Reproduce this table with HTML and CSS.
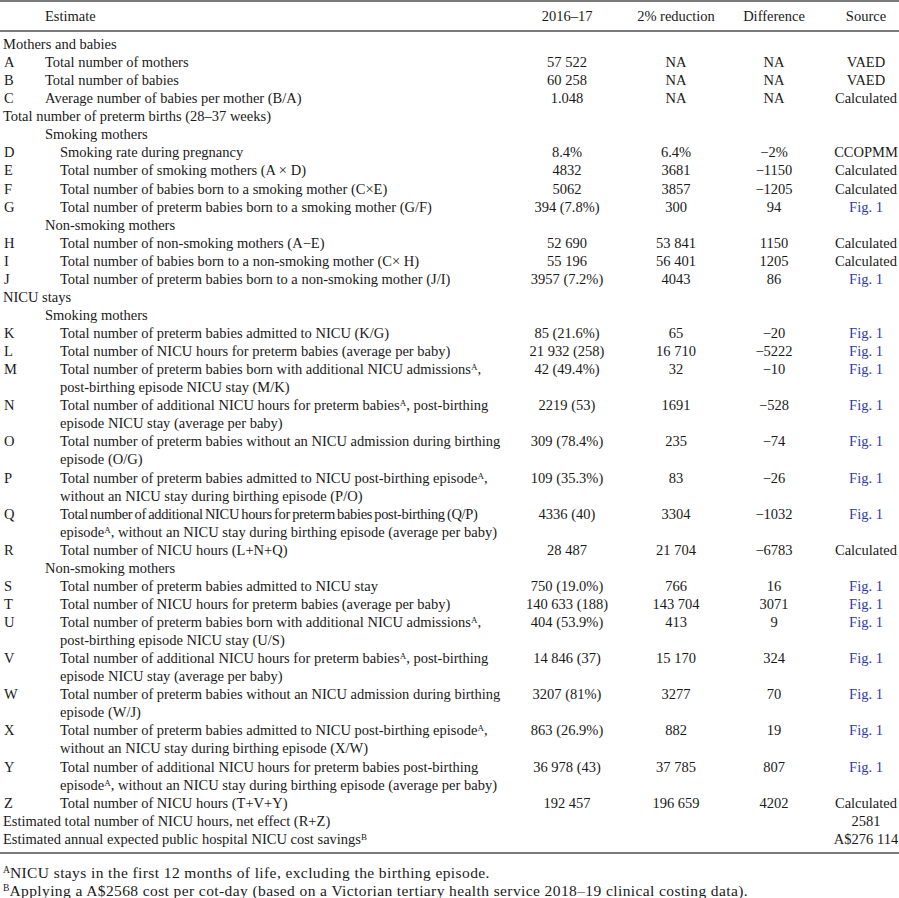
FILE: index.html
```html
<!DOCTYPE html>
<html lang="en">
<head>
<meta charset="utf-8">
<title>Estimated NICU cost savings</title>
<link rel="stylesheet" href="styles.css">
</head>
<body>
<table class="tbl">
  <colgroup>
    <col class="c-key">
    <col class="c-desc">
    <col class="c-a">
    <col class="c-b">
    <col class="c-c">
    <col class="c-src">
  </colgroup>
  <thead>
    <tr class="head">
      <th class="key"></th>
      <th class="desc">Estimate</th>
      <th class="num">2016–17</th>
      <th class="num">2% reduction</th>
      <th class="num">Difference</th>
      <th class="src">Source</th>
    </tr>
  </thead>
  <tbody>
    <tr class="sec first"><td colspan="6">Mothers and babies</td></tr>
    <tr><td class="key">A</td><td class="desc">Total number of mothers</td><td class="num">57 522</td><td class="num">NA</td><td class="num">NA</td><td class="src">VAED</td></tr>
    <tr><td class="key">B</td><td class="desc">Total number of babies</td><td class="num">60 258</td><td class="num">NA</td><td class="num">NA</td><td class="src">VAED</td></tr>
    <tr><td class="key">C</td><td class="desc">Average number of babies per mother (B/A)</td><td class="num">1.048</td><td class="num">NA</td><td class="num">NA</td><td class="src">Calculated</td></tr>
    <tr class="sec"><td colspan="6">Total number of preterm births (28–37 weeks)</td></tr>
    <tr class="sub"><td colspan="6">Smoking mothers</td></tr>
    <tr><td class="key">D</td><td class="desc ind">Smoking rate during pregnancy</td><td class="num">8.4%</td><td class="num">6.4%</td><td class="num">−2%</td><td class="src">CCOPMM</td></tr>
    <tr><td class="key">E</td><td class="desc ind">Total number of smoking mothers (A × D)</td><td class="num">4832</td><td class="num">3681</td><td class="num">−1150</td><td class="src">Calculated</td></tr>
    <tr><td class="key">F</td><td class="desc ind">Total number of babies born to a smoking mother (C×E)</td><td class="num">5062</td><td class="num">3857</td><td class="num">−1205</td><td class="src">Calculated</td></tr>
    <tr><td class="key">G</td><td class="desc ind">Total number of preterm babies born to a smoking mother (G/F)</td><td class="num">394 (7.8%)</td><td class="num">300</td><td class="num">94</td><td class="src"><a class="fig" href="#">Fig. 1</a></td></tr>
    <tr class="sub"><td colspan="6">Non-smoking mothers</td></tr>
    <tr><td class="key">H</td><td class="desc ind">Total number of non-smoking mothers (A−E)</td><td class="num">52 690</td><td class="num">53 841</td><td class="num">1150</td><td class="src">Calculated</td></tr>
    <tr><td class="key">I</td><td class="desc ind">Total number of babies born to a non-smoking mother (C× H)</td><td class="num">55 196</td><td class="num">56 401</td><td class="num">1205</td><td class="src">Calculated</td></tr>
    <tr><td class="key">J</td><td class="desc ind">Total number of preterm babies born to a non-smoking mother (J/I)</td><td class="num">3957 (7.2%)</td><td class="num">4043</td><td class="num">86</td><td class="src"><a class="fig" href="#">Fig. 1</a></td></tr>
    <tr class="sec"><td colspan="6">NICU stays</td></tr>
    <tr class="sub"><td colspan="6">Smoking mothers</td></tr>
    <tr><td class="key">K</td><td class="desc ind">Total number of preterm babies admitted to NICU (K/G)</td><td class="num">85 (21.6%)</td><td class="num">65</td><td class="num">−20</td><td class="src"><a class="fig" href="#">Fig. 1</a></td></tr>
    <tr><td class="key">L</td><td class="desc ind">Total number of NICU hours for preterm babies (average per baby)</td><td class="num">21 932 (258)</td><td class="num">16 710</td><td class="num">−5222</td><td class="src"><a class="fig" href="#">Fig. 1</a></td></tr>
    <tr><td class="key">M</td><td class="desc ind">Total number of preterm babies born with additional NICU admissions<sup>A</sup>,<br>post-birthing episode NICU stay (M/K)</td><td class="num">42 (49.4%)</td><td class="num">32</td><td class="num">−10</td><td class="src"><a class="fig" href="#">Fig. 1</a></td></tr>
    <tr><td class="key">N</td><td class="desc ind">Total number of additional NICU hours for preterm babies<sup>A</sup>, post-birthing<br>episode NICU stay (average per baby)</td><td class="num">2219 (53)</td><td class="num">1691</td><td class="num">−528</td><td class="src"><a class="fig" href="#">Fig. 1</a></td></tr>
    <tr><td class="key">O</td><td class="desc ind">Total number of preterm babies without an NICU admission during birthing<br>episode (O/G)</td><td class="num">309 (78.4%)</td><td class="num">235</td><td class="num">−74</td><td class="src"><a class="fig" href="#">Fig. 1</a></td></tr>
    <tr><td class="key">P</td><td class="desc ind">Total number of preterm babies admitted to NICU post-birthing episode<sup>A</sup>,<br>without an NICU stay during birthing episode (P/O)</td><td class="num">109 (35.3%)</td><td class="num">83</td><td class="num">−26</td><td class="src"><a class="fig" href="#">Fig. 1</a></td></tr>
    <tr><td class="key">Q</td><td class="desc ind"><span class="tight">Total number of additional NICU hours for preterm babies post-birthing (Q/P)</span><br>episode<sup>A</sup>, without an NICU stay during birthing episode (average per baby)</td><td class="num">4336 (40)</td><td class="num">3304</td><td class="num">−1032</td><td class="src"><a class="fig" href="#">Fig. 1</a></td></tr>
    <tr><td class="key">R</td><td class="desc ind">Total number of NICU hours (L+N+Q)</td><td class="num">28 487</td><td class="num">21 704</td><td class="num">−6783</td><td class="src">Calculated</td></tr>
    <tr class="sub"><td colspan="6">Non-smoking mothers</td></tr>
    <tr><td class="key">S</td><td class="desc ind">Total number of preterm babies admitted to NICU stay</td><td class="num">750 (19.0%)</td><td class="num">766</td><td class="num">16</td><td class="src"><a class="fig" href="#">Fig. 1</a></td></tr>
    <tr><td class="key">T</td><td class="desc ind">Total number of NICU hours for preterm babies (average per baby)</td><td class="num">140 633 (188)</td><td class="num">143 704</td><td class="num">3071</td><td class="src"><a class="fig" href="#">Fig. 1</a></td></tr>
    <tr><td class="key">U</td><td class="desc ind">Total number of preterm babies born with additional NICU admissions<sup>A</sup>,<br>post-birthing episode NICU stay (U/S)</td><td class="num">404 (53.9%)</td><td class="num">413</td><td class="num">9</td><td class="src"><a class="fig" href="#">Fig. 1</a></td></tr>
    <tr><td class="key">V</td><td class="desc ind">Total number of additional NICU hours for preterm babies<sup>A</sup>, post-birthing<br>episode NICU stay (average per baby)</td><td class="num">14 846 (37)</td><td class="num">15 170</td><td class="num">324</td><td class="src"><a class="fig" href="#">Fig. 1</a></td></tr>
    <tr><td class="key">W</td><td class="desc ind">Total number of preterm babies without an NICU admission during birthing<br>episode (W/J)</td><td class="num">3207 (81%)</td><td class="num">3277</td><td class="num">70</td><td class="src"><a class="fig" href="#">Fig. 1</a></td></tr>
    <tr><td class="key">X</td><td class="desc ind">Total number of preterm babies admitted to NICU post-birthing episode<sup>A</sup>,<br>without an NICU stay during birthing episode (X/W)</td><td class="num">863 (26.9%)</td><td class="num">882</td><td class="num">19</td><td class="src"><a class="fig" href="#">Fig. 1</a></td></tr>
    <tr><td class="key">Y</td><td class="desc ind">Total number of additional NICU hours for preterm babies post-birthing<br>episode<sup>A</sup>, without an NICU stay during birthing episode (average per baby)</td><td class="num">36 978 (43)</td><td class="num">37 785</td><td class="num">807</td><td class="src"><a class="fig" href="#">Fig. 1</a></td></tr>
    <tr><td class="key">Z</td><td class="desc ind">Total number of NICU hours (T+V+Y)</td><td class="num">192 457</td><td class="num">196 659</td><td class="num">4202</td><td class="src">Calculated</td></tr>
    <tr class="sec"><td colspan="5">Estimated total number of NICU hours, net effect (R+Z)</td><td class="src">2581</td></tr>
    <tr class="sec last"><td colspan="5">Estimated annual expected public hospital NICU cost savings<sup>B</sup></td><td class="src">A$276 114</td></tr>
  </tbody>
</table>
<div class="notes">
  <p class="note"><sup>A</sup>NICU stays in the first 12 months of life, excluding the birthing episode.</p>
  <p class="note"><sup>B</sup>Applying a A$2568 cost per cot-day (based on a Victorian tertiary health service 2018–19 clinical costing data).</p>
</div>
</body>
</html>
```

FILE: styles.css
```css
html, body {
  margin: 0;
  padding: 0;
  background: #ffffff;
}

body {
  font-family: "Liberation Serif", "Times New Roman", serif;
  font-size: 14.5px;
  line-height: 18.07px;
  color: #1a1a1a;
}

.tbl {
  width: 899px;
  border-collapse: collapse;
  table-layout: fixed;
  border-top: 2px solid #7a7a7a;
  border-bottom: 2px solid #7a7a7a;
}

.c-key { width: 42px; }
.c-desc { width: 475px; }
.c-a { width: 100px; }
.c-b { width: 118px; }
.c-c { width: 78px; }
.c-src { width: 86px; }

.tbl th,
.tbl td {
  padding: 0;
  vertical-align: top;
  font-weight: normal;
  white-space: nowrap;
}

.head th {
  padding-top: 5px;
  padding-bottom: 5px;
  line-height: 18px;
  border-bottom: 2px solid #7a7a7a;
}

.head .desc {
  text-align: left;
  padding-left: 1px;
}

.key {
  padding-left: 4px !important;
  text-align: left;
}

.desc {
  text-align: left;
  padding-left: 3px !important;
}

.desc.ind {
  padding-left: 18px !important;
}

.num {
  text-align: center;
}

.src {
  text-align: center;
  padding-left: 20px !important;
}

.sec td {
  padding-left: 3px;
}

.sub td {
  padding-left: 45px;
}

.first td {
  padding-top: 3px;
}

.last td {
  padding-bottom: 4px;
}

.tight {
  letter-spacing: -0.35px;
  word-spacing: -1px;
}

sup {
  font-size: 0.62em;
  line-height: 0;
  vertical-align: 0.5em;
}

.fig {
  color: #2f3aa6;
  text-decoration: none;
}

.notes {
  padding-top: 10px;
  padding-left: 3px;
}

.note {
  margin: 0;
  font-size: 15.5px;
  line-height: 18px;
  letter-spacing: 0.4px;
}

.note sup {
  letter-spacing: 0;
}
```
